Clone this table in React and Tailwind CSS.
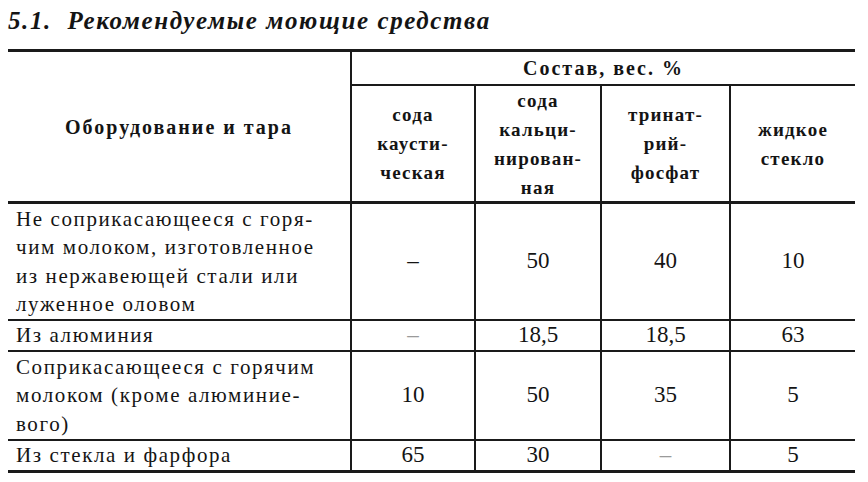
import React from 'react';

const SUB = [
  ['сода', 'каусти-', 'ческая'],
  ['сода', 'кальци-', 'нирован-', 'ная'],
  ['тринат-', 'рий-', 'фосфат'],
  ['жидкое', 'стекло'],
];

const ROWS = [
  { name: ['Не соприкасающееся с горя-', 'чим молоком, изготовленное', 'из нержавеющей стали или', 'луженное оловом'], vals: ['–', '50', '40', '10'] },
  { name: ['Из алюминия'], vals: ['–', '18,5', '18,5', '63'], faint: 0 },
  { name: ['Соприкасающееся с горячим', 'молоком (кроме алюминие-', 'вого)'], vals: ['10', '50', '35', '5'] },
  { name: ['Из стекла и фарфора'], vals: ['65', '30', '–', '5'], faint: 2 },
];

export default function App() {
  return (
    <div className="w-[868px] h-[482px] bg-white text-[#141414] overflow-hidden" style={{ fontFamily: '"Liberation Serif", "Times New Roman", serif' }}>
      <div className="h-[49px] pl-[8px] pt-[6px] text-[25px] font-bold italic leading-[30px] tracking-[1.6px]">
        5.1.&nbsp;&nbsp;Рекомендуемые моющие средства
      </div>
      <div className="ml-[8px] w-[847px] grid grid-cols-[344px_124px_126px_129px_124px] grid-rows-[34px_118px_117px_31px_89px_29px] border-t-[3px] border-b-[3px] border-[#1a1a1a]">
        <div className="row-span-2 flex items-center justify-center border-r-[2px] border-b-[3px] border-[#1a1a1a] text-[20px] font-bold tracking-[2px]">
          Оборудование и тара
        </div>
        <div className="col-span-4 flex items-center justify-center border-b-[2px] border-[#1a1a1a] text-[20px] font-bold tracking-[2px]">
          Состав, вес. %
        </div>
        {SUB.map((lines, i) => (
          <div key={i} className={`flex flex-col items-center justify-center border-b-[3px] border-[#1a1a1a] text-[19px] font-bold tracking-[1.2px] leading-[29px] ${i < 3 ? 'border-r-[2px]' : ''}`}>
            {lines.map((l, j) => <div key={j}>{l}</div>)}
          </div>
        ))}
        {ROWS.map((r, ri) => (
          <React.Fragment key={ri}>
            <div className={`flex flex-col justify-center border-r-[2px] border-[#1a1a1a] pl-[8px] text-[21px] tracking-[1.6px] leading-[28.5px] whitespace-nowrap ${ri < ROWS.length - 1 ? 'border-b-[2px]' : ''}`}>
              {r.name.map((l, j) => <div key={j}>{l}</div>)}
            </div>
            {r.vals.map((v, vi) => (
              <div key={vi} className={`flex items-center justify-center text-[23px] border-[#1a1a1a] ${vi < 3 ? 'border-r-[2px]' : ''} ${ri < ROWS.length - 1 ? 'border-b-[2px]' : ''} ${r.faint === vi ? 'text-[#9a9a9a]' : ''}`}>
                {v}
              </div>
            ))}
          </React.Fragment>
        ))}
      </div>
    </div>
  );
}
